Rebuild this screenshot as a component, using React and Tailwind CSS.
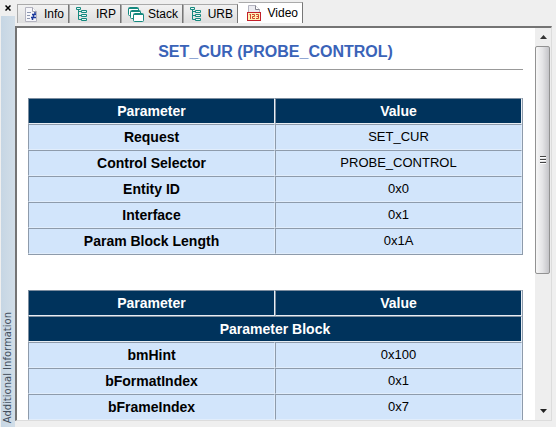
import React, { useState } from 'react';
import clsx from 'clsx';

const InfoIcon = () => (
  <svg width="14" height="15" viewBox="0 0 14 15" fill="none">
    <path d="M1.5 .5h7l4 4v10h-11z" fill="#f6f6fa" stroke="#b4b4c0" />
    <path d="M8.5 .5v4h4" stroke="#a3a3b0" fill="#fff" />
    <path d="M3 5.5h4M3 8.5h3M3 11.5h3" stroke="#8d97b0" />
    <path d="M11 5v3M8 7.5h4M9.500 8v3M7 10.500h5M8.500 11v2" stroke="#1c3a9c" strokeWidth="1.5" />
  </svg>
);

const TreeIcon = () => (
  <svg width="12" height="14" viewBox="0 0 12 14" fill="none" stroke="#15897f">
    <path d="M.5 .5h4v2h-4z" fill="#e6f6f4" />
    <path d="M2.5 3v9.5M2.5 4.5h3M2.5 8.5h3M2.5 12.5h3" />
    <path d="M5.5 3.5h5v2h-5zM5.5 7.5h5v2h-5zM5.5 11.5h5v2h-5z" fill="#e6f6f4" />
  </svg>
);

const StackIcon = () => (
  <svg width="16" height="15" viewBox="0 0 16 15" fill="#fff" stroke="#15897f">
    <rect x=".5" y=".5" width="10" height="8" rx="1" />
    <path d="M1 1.5h9" />
    <rect x="2.5" y="3.5" width="10" height="8" rx="1" />
    <path d="M3 4.5h9" />
    <rect x="5.5" y="6.5" width="10" height="8" rx="1" />
    <path d="M6 7.5h9" />
  </svg>
);

const VideoIcon = () => (
  <svg width="14" height="16" viewBox="0 0 14 16" fill="none">
    <path d="M1.5 .5h7l4 4v10h-11z" fill="#ececf1" stroke="#b4b4c0" />
    <path d="M8.5 .5v4h4" stroke="#85858f" fill="#fff" />
    <rect x=".5" y="7.5" width="13" height="8" fill="#fff3b8" stroke="#c3202b" />
    <path d="M3.5 9v5M2.5 9.5h1M5 9.5h2.5v2h-2v2H8M9 9.5h2.5v4H9M9.5 11.5h2" stroke="#d0482c" />
  </svg>
);

const tabs = [
  { name: 'Info', icon: InfoIcon, width: 'w-[52px]' },
  { name: 'IRP', icon: TreeIcon, width: 'w-[52px]' },
  { name: 'Stack', icon: StackIcon, width: 'w-[62px]' },
  { name: 'URB', icon: TreeIcon, width: 'w-[55px]' },
  { name: 'Video', icon: VideoIcon, width: 'w-[65px]' },
];

const requestRows = [
  ['Request', 'SET_CUR'],
  ['Control Selector', 'PROBE_CONTROL'],
  ['Entity ID', '0x0'],
  ['Interface', '0x1'],
  ['Param Block Length', '0x1A'],
];

const blockRows = [
  ['bmHint', '0x100'],
  ['bFormatIndex', '0x1'],
  ['bFrameIndex', '0x7'],
];

const headCell = 'h-[26px] p-0 border border-t-[#7c8d9f] border-l-[#7c8d9f] border-r-[#e8eef4] border-b-[#e8eef4] bg-[#00335c] text-white font-bold';
const bodyCell = 'h-[26px] p-0 border border-t-[#8e9bab] border-l-[#8e9bab] border-r-[#e1edfb] border-b-[#e1edfb] bg-[#d2e5fb]';

const ParamTable = ({ rows, section }) => (
  <table className="w-full table-fixed border-separate border-spacing-0 border-r border-b border-[#8e9bab] text-center text-sm leading-5">
    <thead>
      <tr>
        <th className={headCell}>Parameter</th>
        <th className={headCell}>Value</th>
      </tr>
      {section && (
        <tr>
          <th colSpan={2} className={headCell}>{section}</th>
        </tr>
      )}
    </thead>
    <tbody>
      {rows.map(([name, value]) => (
        <tr key={name}>
          <th scope="row" className={clsx(bodyCell, 'font-bold')}>{name}</th>
          <td className={clsx(bodyCell, 'text-[13px]')}>{value}</td>
        </tr>
      ))}
    </tbody>
  </table>
);

const ScrollBar = () => (
  <div className="flex w-4 shrink-0 flex-col bg-[#eeeeee]">
    <button aria-label="Scroll up" className="flex h-[18px] shrink-0 items-center justify-center">
      <svg width="7" height="4" viewBox="0 0 7 4"><path d="M0 4 3.5 0 7 4z" fill="#333" /></svg>
    </button>
    <div className="flex flex-1 flex-col">
      <div className="flex h-[64%] w-[15px] flex-col items-center justify-center gap-px rounded-xs border border-[#929292] bg-linear-to-r from-[#f7f7f7] via-[#e4e4e6] to-[#c4c4c8]">
        <span className="h-0.5 w-1.5 border-t border-[#444] bg-white" />
        <span className="h-0.5 w-1.5 border-t border-[#444] bg-white" />
        <span className="h-0.5 w-1.5 border-t border-[#444] bg-white" />
      </div>
    </div>
    <button aria-label="Scroll down" className="flex h-[18px] shrink-0 items-center justify-center">
      <svg width="7" height="4" viewBox="0 0 7 4"><path d="M0 0h7L3.5 4z" fill="#222" /></svg>
    </button>
  </div>
);

const App = () => {
  const [active, setActive] = useState('Video');

  return (
    <div className="h-screen overflow-hidden bg-white pb-1 font-['Liberation_Sans',Arial,sans-serif] text-black">
      <div className="flex h-full bg-[#efefef]">
        {/* Docked panel caption */}
        <aside className="flex w-[15px] shrink-0 flex-col pl-px">
          <button aria-label="Close" className="flex h-4 shrink-0 items-center justify-center">
            <svg width="6" height="6" viewBox="0 0 6 6" stroke="#000" strokeWidth="1.5"><path d="M.5 .5l5 5M5.5 .5l-5 5" /></svg>
          </button>
          <div className="flex w-[14px] flex-1 items-center bg-linear-to-r from-[#c6d6e4] to-[#d2dee8] pb-1 [writing-mode:vertical-rl]">
            <span className="mt-auto rotate-180 font-['DejaVu_Sans',sans-serif] text-[10px] leading-[14px] whitespace-nowrap text-[#44505e]">
              Additional Information
            </span>
          </div>
        </aside>

        <main className="flex min-w-0 flex-1 flex-col pr-1 pb-1.5">
          <nav className="flex h-[26px] shrink-0 items-end pb-[3px] pl-0.5">
            {tabs.map(({ name, icon: Icon, width }) => (
              <button
                key={name}
                onClick={() => setActive(name)}
                className={clsx(
                  width,
                  'flex items-center justify-between border-t border-r border-l border-t-[#aaa] border-r-[#777] pr-1 text-xs',
                  name === active
                    ? 'h-[21px] border-l-white bg-white pl-2'
                    : 'h-[19px] border-l-[#aaa] bg-linear-to-b from-[#f2f2f2] to-[#dedede] pl-1.5'
                )}
              >
                <Icon />
                {name}
              </button>
            ))}
          </nav>

          <section className="flex min-h-0 flex-1 border-t-2 border-r border-b border-l-2 border-t-[#747474] border-r-[#dcdcdc] border-b-[#dcdcdc] border-l-[#747474] bg-white">
            <div className="min-w-0 flex-1 overflow-hidden pt-3 pr-3 pl-[11px]">
              <h1 className="border-b border-[#999] pb-[5px] text-center text-base leading-6 font-bold text-[#3a63b8]">
                SET_CUR (PROBE_CONTROL)
              </h1>
              <div className="flex flex-col gap-[35px] pt-7">
                <ParamTable rows={requestRows} />
                <ParamTable rows={blockRows} section="Parameter Block" />
              </div>
            </div>
            <ScrollBar />
          </section>
        </main>
      </div>
    </div>
  );
};

export default App;
